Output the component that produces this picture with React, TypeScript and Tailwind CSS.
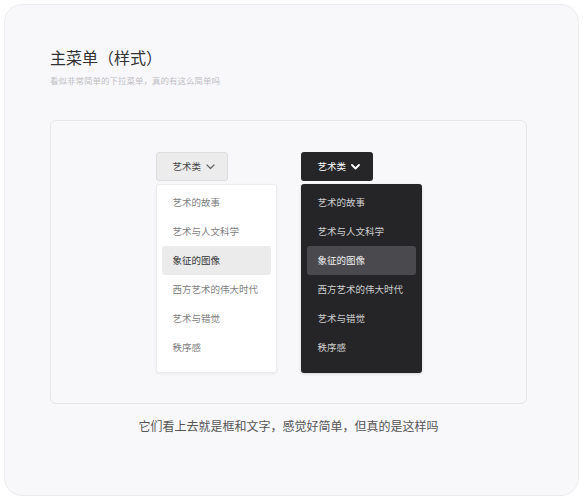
import React from "react"

const items = ["艺术的故事", "艺术与人文科学", "象征的图像", "西方艺术的伟大时代", "艺术与错觉", "秩序感"]
const activeIndex = 2

function Chevron({ dark }: { dark?: boolean }) {
  return (
    <svg width="9" height="6" viewBox="0 0 9 6" fill="none">
      <polyline
        points="1,1 4.5,4.5 8,1"
        stroke={dark ? "#ffffff" : "#666666"}
        strokeWidth={dark ? 1.8 : 1.2}
        strokeLinecap="round"
        strokeLinejoin="round"
      />
    </svg>
  )
}

function LightMenu() {
  return (
    <div className="flex w-[121px] flex-col items-start">
      <button className="flex h-[29px] w-[72px] items-center gap-[5px] rounded-[3px] border border-[#dcdcdc] bg-[#ececec] pl-[16px] text-[9.5px] text-[#444]">
        <span>艺术类</span>
        <Chevron />
      </button>
      <div className="mt-[3px] w-full rounded-[3px] border border-[#ececec] bg-white px-[5px] pb-[10px] pt-[3px] shadow-[0_1px_3px_rgba(0,0,0,0.06)]">
        {items.map((item, i) => (
          <div
            key={item}
            className={
              i === activeIndex
                ? "flex h-[29px] items-center rounded-[3px] bg-[#ebebeb] pl-[11px] text-[9.5px] text-[#333]"
                : "flex h-[29px] items-center pl-[11px] text-[9.5px] text-[#808080]"
            }
          >
            {item}
          </div>
        ))}
      </div>
    </div>
  )
}

function DarkMenu() {
  return (
    <div className="flex w-[121px] flex-col items-start">
      <button className="flex h-[29px] w-[72px] items-center gap-[5px] rounded-[3px] bg-[#262628] pl-[17px] text-[9.5px] text-white">
        <span>艺术类</span>
        <Chevron dark />
      </button>
      <div className="mt-[3px] w-full rounded-[3px] bg-[#252527] px-[6px] pb-[11px] pt-[4px] shadow-[0_1px_3px_rgba(0,0,0,0.15)]">
        {items.map((item, i) => (
          <div
            key={item}
            className={
              i === activeIndex
                ? "flex h-[29px] items-center rounded-[3px] bg-[#4a4a4e] pl-[11px] text-[9.5px] text-[#f2f2f2]"
                : "flex h-[29px] items-center pl-[11px] text-[9.5px] text-[#cfcfcf]"
            }
          >
            {item}
          </div>
        ))}
      </div>
    </div>
  )
}

export default function App() {
  return (
    <div
      className="h-[500px] w-[583px] bg-white p-[4px]"
      style={{ fontFamily: '"Noto Sans CJK SC", "Noto Sans", sans-serif' }}
    >
      <div className="h-[492px] w-[575px] rounded-[18px] border border-[#ececee] bg-[#f8f8fa] pl-[45px] pt-[41px]">
        <h1 className="text-[16px] font-normal leading-[22px] text-[#333]">主菜单（样式）</h1>
        <p className="mt-[6px] text-[8.5px] leading-[12px] text-[#c0c0c4]">看似非常简单的下拉菜单，真的有这么简单吗</p>
        <div className="mt-[34px] flex h-[284px] w-[477px] justify-center gap-[24px] rounded-[6px] border border-[#e6e6e8] bg-[#f8f8fa] pt-[31px]">
          <LightMenu />
          <DarkMenu />
        </div>
        <p className="mt-[13px] w-[477px] text-center text-[12px] leading-[18px] text-[#555]">
          它们看上去就是框和文字，感觉好简单，但真的是这样吗
        </p>
      </div>
    </div>
  )
}
